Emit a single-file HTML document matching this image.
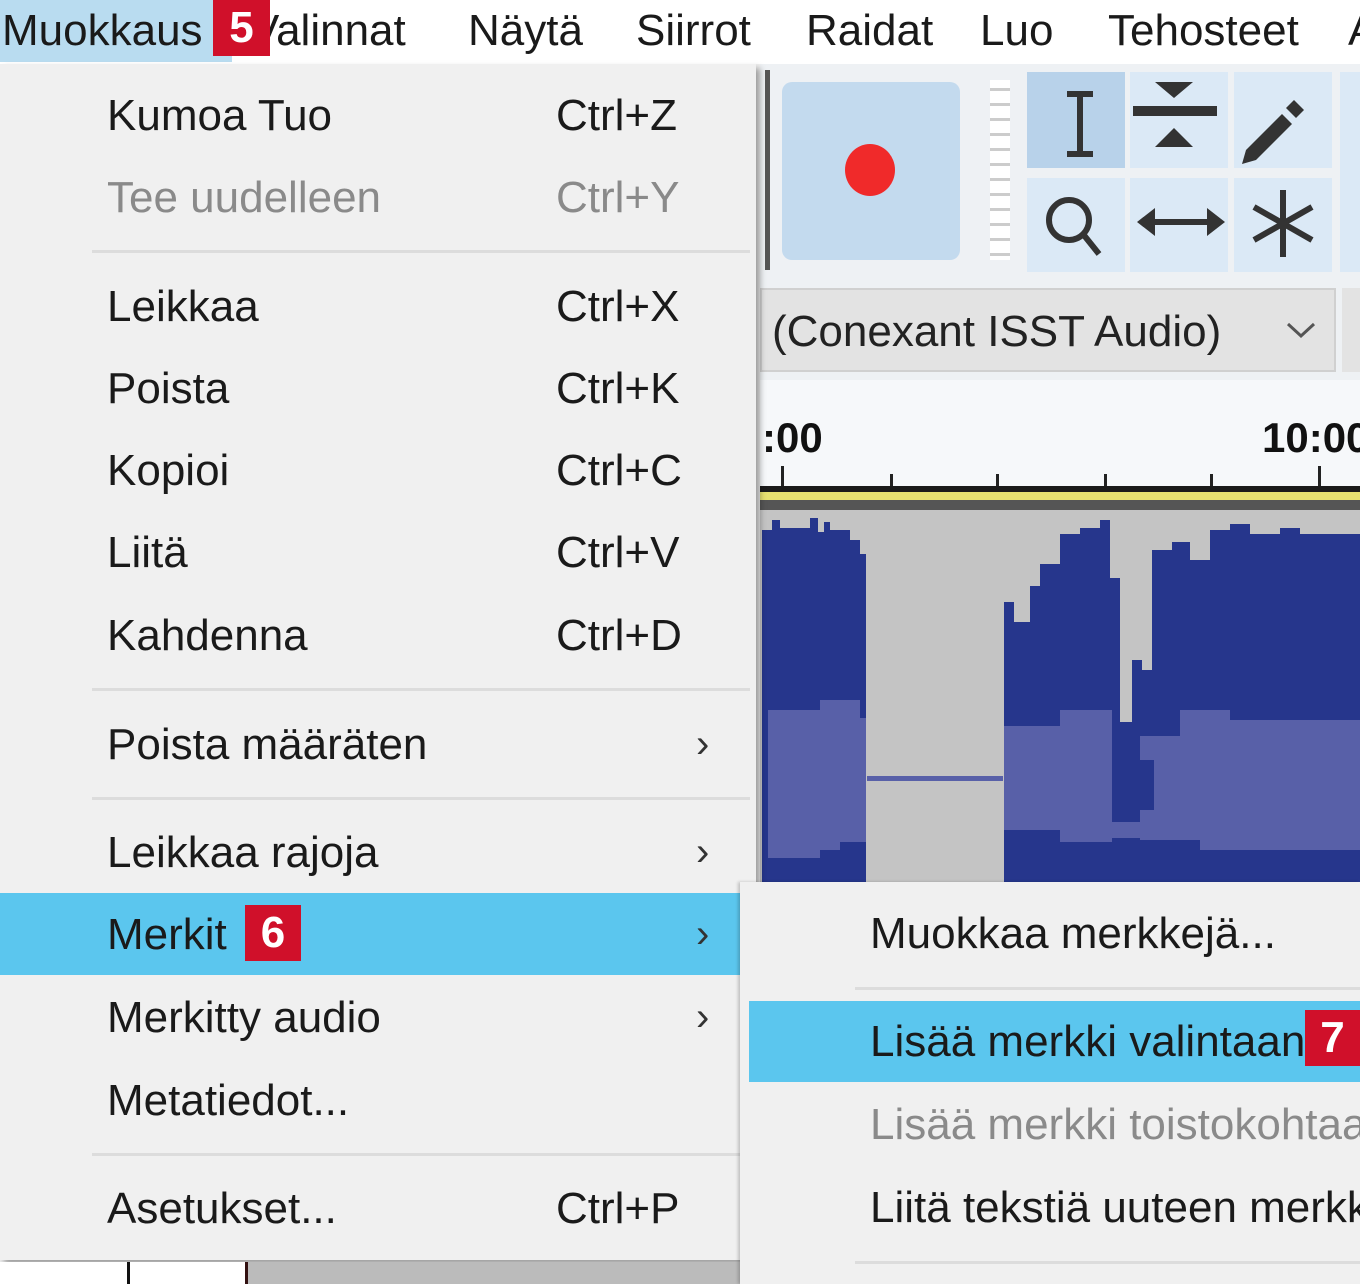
<!DOCTYPE html>
<html><head><meta charset="utf-8"><style>
*{margin:0;padding:0;box-sizing:border-box}
body{width:1360px;height:1284px;overflow:hidden;background:#f0f0f0;position:relative;font-family:"Liberation Sans",sans-serif;color:#1a1a1a}
.a{position:absolute}
.t{position:absolute;font-size:44px;white-space:nowrap;line-height:1;transform:scaleX(1.0);transform-origin:left center}
.g{color:#8a8a8a}
.sep{position:absolute;height:3px;background:#dcdcdc}
.badge{position:absolute;background:#d0102a;color:#fff;font-weight:bold;font-size:44px;text-align:center;line-height:56px}
.arr{position:absolute;font-size:40px;color:#333;line-height:1}
</style></head><body>
<!-- menubar -->
<div class="a" style="left:0;top:0;width:1360px;height:64px;background:#fff"></div>
<div class="a" style="left:0;top:0;width:232px;height:62px;background:#b9dcf0"></div>
<div class="t" style="left:2px;top:9px">Muokkaus</div>
<div class="t" style="left:250px;top:9px">Valinnat</div>
<div class="t" style="left:468px;top:9px">Näytä</div>
<div class="t" style="left:636px;top:9px">Siirrot</div>
<div class="t" style="left:806px;top:9px">Raidat</div>
<div class="t" style="left:980px;top:9px">Luo</div>
<div class="t" style="left:1108px;top:9px">Tehosteet</div>
<div class="t" style="left:1348px;top:9px">A</div>
<div class="badge" style="left:213px;top:0;width:57px;height:56px">5</div>

<!-- toolbar area -->
<div class="a" style="left:760px;top:64px;width:600px;height:320px;background:#eef1f4"></div>
<div class="a" style="left:765px;top:70px;width:5px;height:200px;background:#555"></div>
<div class="a" style="left:782px;top:82px;width:178px;height:178px;background:#c3daee;border-radius:10px"></div>
<div class="a" style="left:845px;top:144px;width:50px;height:52px;background:#f02a2a;border-radius:50%"></div>
<div class="a" style="left:990px;top:80px;width:20px;height:180px;background:repeating-linear-gradient(#fff 0 8px,#ccc 8px 11px,#fff 11px 15px)"></div>
<div class="a" style="left:1027px;top:72px;width:98px;height:96px;background:#b8d2ea"></div>
<div class="a" style="left:1130px;top:72px;width:98px;height:96px;background:#dbe9f6"></div>
<div class="a" style="left:1234px;top:72px;width:98px;height:96px;background:#dbe9f6"></div>
<div class="a" style="left:1027px;top:178px;width:98px;height:94px;background:#dbe9f6"></div>
<div class="a" style="left:1130px;top:178px;width:98px;height:94px;background:#dbe9f6"></div>
<div class="a" style="left:1234px;top:178px;width:98px;height:94px;background:#dbe9f6"></div>
<div class="a" style="left:1340px;top:72px;width:20px;height:200px;background:#dbe9f6"></div>
<svg class="a" style="left:1027px;top:72px" width="310" height="200" viewBox="0 0 310 200">
<g stroke="#333" stroke-width="6" fill="none" stroke-linecap="butt">
<path d="M53 22V82M40 22H66M40 82H66"/>
<circle cx="42" cy="148" r="20"/><path d="M56 162L72 182"/>
<path d="M122 150H186"/>
<path d="M256 118V185M227 135L285 168M227 168L285 135"/>
</g>
<path d="M128 10H166L147 26Z M128 75H166L147 56Z" fill="#333"/>
<path d="M106 34H190V44H106Z" fill="#333"/>
<path d="M110 150L128 136V164Z M198 150L180 136V164Z" fill="#333"/>
<path d="M219 78L255 42L265 52L229 88L215 92Z M259 36L267 28L277 38L269 46Z" fill="#333"/>
</svg>
<!-- dropdown -->
<div class="a" style="left:760px;top:288px;width:576px;height:84px;background:#e3e3e3;border:2px solid #d0d0d0"></div>
<div class="a" style="left:1342px;top:288px;width:18px;height:84px;background:#e3e3e3"></div>
<div class="t" style="left:772px;top:310px;color:#222">(Conexant ISST Audio)</div>
<svg class="a" style="left:1285px;top:320px" width="32" height="20"><path d="M3 4L16 16L29 4" stroke="#555" stroke-width="3" fill="none"/></svg>
<!-- ruler -->
<div class="a" style="left:760px;top:380px;width:600px;height:108px;background:#f6f8fa"></div>
<div class="a" style="left:762px;top:414px;font-size:42px;font-weight:bold;color:#111">:00</div>
<div class="a" style="left:1262px;top:414px;font-size:42px;font-weight:bold;color:#111">10:00</div>
<div class="a" style="left:781px;top:466px;width:3px;height:22px;background:#222"></div>
<div class="a" style="left:890px;top:474px;width:3px;height:14px;background:#222"></div>
<div class="a" style="left:996px;top:474px;width:3px;height:14px;background:#222"></div>
<div class="a" style="left:1104px;top:474px;width:3px;height:14px;background:#222"></div>
<div class="a" style="left:1210px;top:474px;width:3px;height:14px;background:#222"></div>
<div class="a" style="left:1318px;top:466px;width:3px;height:22px;background:#222"></div>
<div class="a" style="left:760px;top:486px;width:600px;height:6px;background:#1a1a1a"></div>
<div class="a" style="left:760px;top:492px;width:600px;height:8px;background:#e6e070"></div>
<div class="a" style="left:760px;top:500px;width:600px;height:10px;background:#555"></div>
<!-- waveform -->
<svg class="a" style="left:760px;top:510px" width="600" height="372" viewBox="0 0 600 372">
<rect width="600" height="372" fill="#c4c4c4"/>
<path d="M2 20H12V10H20V18H50V8H58V22H64V12H70V20H90V30H100V44H106V372H2Z" fill="#26368c"/>
<path d="M244 92H254V112H270V76H280V54H300V24H320V18H340V10H350V68H360V212H372V150H382V160H392V40H412V32H430V50H450V20H470V14H490V24H520V18H540V24H600V372H244Z" fill="#26368c"/>
<path d="M8 200H60V190H100V208H106V332H80V340H60V348H8Z" fill="#5860a8"/>
<path d="M244 216H300V200H352V226H420V200H470V210H600V340H440V330H380V328H352V332H300V320H244Z" fill="#5860a8"/>
<path d="M352 226H380V250H394V300H380V312H352Z" fill="#26368c"/>
<rect x="107" y="266" width="136" height="5" fill="#5860a8"/>
<rect x="107" y="0" width="137" height="8" fill="#c4c4c4"/>
</svg>

<!-- main menu -->
<div class="a" style="left:0;top:64px;width:756px;height:1196px;background:#f0f0f0;box-shadow:4px 4px 6px rgba(0,0,0,.35)"></div>
<div class="a" style="left:0;top:1262px;width:760px;height:22px;background:#fff"></div>
<div class="a" style="left:246px;top:1262px;width:514px;height:22px;background:#bbb"></div>
<div class="a" style="left:127px;top:1262px;width:3px;height:22px;background:#111"></div>
<div class="a" style="left:245px;top:1262px;width:3px;height:22px;background:#311"></div>

<div class="t" style="left:107px;top:94px">Kumoa Tuo</div><div class="t" style="left:556px;top:94px">Ctrl+Z</div>
<div class="t g" style="left:107px;top:176px">Tee uudelleen</div><div class="t g" style="left:556px;top:176px">Ctrl+Y</div>
<div class="sep" style="left:92px;top:250px;width:658px"></div>
<div class="t" style="left:107px;top:285px">Leikkaa</div><div class="t" style="left:556px;top:285px">Ctrl+X</div>
<div class="t" style="left:107px;top:367px">Poista</div><div class="t" style="left:556px;top:367px">Ctrl+K</div>
<div class="t" style="left:107px;top:449px">Kopioi</div><div class="t" style="left:556px;top:449px">Ctrl+C</div>
<div class="t" style="left:107px;top:531px">Liitä</div><div class="t" style="left:556px;top:531px">Ctrl+V</div>
<div class="t" style="left:107px;top:614px">Kahdenna</div><div class="t" style="left:556px;top:614px">Ctrl+D</div>
<div class="sep" style="left:92px;top:688px;width:658px"></div>
<div class="t" style="left:107px;top:723px">Poista määräten</div><div class="arr" style="left:696px;top:724px">›</div>
<div class="sep" style="left:92px;top:797px;width:658px"></div>
<div class="t" style="left:107px;top:831px">Leikkaa rajoja</div><div class="arr" style="left:696px;top:832px">›</div>
<div class="a" style="left:0;top:893px;width:740px;height:82px;background:#5bc6ee"></div>
<div class="t" style="left:107px;top:913px">Merkit</div><div class="arr" style="left:696px;top:914px">›</div>
<div class="badge" style="left:245px;top:905px;width:56px;height:56px">6</div>
<div class="t" style="left:107px;top:996px">Merkitty audio</div><div class="arr" style="left:696px;top:997px">›</div>
<div class="t" style="left:107px;top:1079px">Metatiedot...</div>
<div class="sep" style="left:92px;top:1153px;width:658px"></div>
<div class="t" style="left:107px;top:1187px">Asetukset...</div><div class="t" style="left:556px;top:1187px">Ctrl+P</div>

<!-- submenu -->
<div class="a" style="left:740px;top:882px;width:620px;height:402px;background:#f0f0f0;box-shadow:-2px 0 3px rgba(0,0,0,.2)"></div>
<div class="t" style="left:870px;top:912px">Muokkaa merkkejä...</div>
<div class="sep" style="left:855px;top:987px;width:505px"></div>
<div class="a" style="left:749px;top:1001px;width:611px;height:81px;background:#5bc6ee"></div>
<div class="t" style="left:870px;top:1020px">Lisää merkki valintaan</div>
<div class="badge" style="left:1305px;top:1010px;width:55px;height:56px">7</div>
<div class="t g" style="left:870px;top:1103px">Lisää merkki toistokohtaan</div>
<div class="t" style="left:870px;top:1186px">Liitä tekstiä uuteen merkkiin</div>
<div class="sep" style="left:855px;top:1261px;width:505px"></div>
</body></html>
